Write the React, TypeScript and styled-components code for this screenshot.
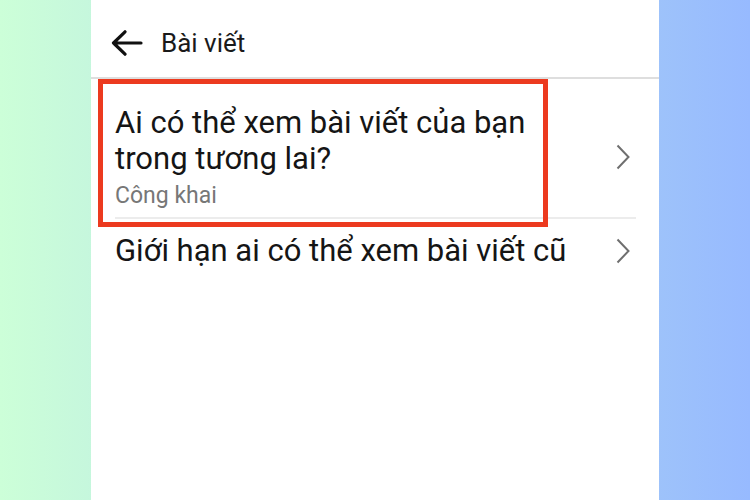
import styled, { createGlobalStyle } from "styled-components";

const GlobalStyle = createGlobalStyle`
  html, body {
    margin: 0;
    padding: 0;
    height: 100%;
  }
  body {
    font-family: Roboto, "Noto Sans", "Liberation Sans", sans-serif;
    background: linear-gradient(90deg, #ccffd8 0%, #97baff 100%);
  }
  #root {
    height: 100%;
  }
`;

const Page = styled.div`
  height: 100vh;
  display: flex;
  justify-content: flex-start;
  padding-left: 91px;
  box-sizing: border-box;
`;

const Screen = styled.div`
  width: 568px;
  height: 100%;
  background: #ffffff;
  display: flex;
  flex-direction: column;
`;

const Header = styled.div`
  height: 79px;
  box-sizing: border-box;
  border-bottom: 2px solid #dedede;
  display: flex;
  align-items: center;
  padding: 8px 0 0 20px;
  gap: 18px;
`;

const BackButton = styled.button`
  border: none;
  background: none;
  padding: 0;
  display: flex;
  cursor: pointer;
`;

const Title = styled.h1`
  margin: 0;
  font-size: 26px;
  font-weight: 400;
  color: #1a1a1a;
`;

const List = styled.div`
  display: flex;
  flex-direction: column;
`;

const Row = styled.div<{ $divider?: boolean; $top: number; $bottom: number }>`
  position: relative;
  margin: 0 23px 0 24px;
  padding: ${(p) => p.$top}px 6px ${(p) => p.$bottom}px 0;
  display: flex;
  align-items: center;
  justify-content: space-between;
  border-bottom: ${(p) => (p.$divider ? "2px solid #ececec" : "none")};
`;

const RowText = styled.div`
  display: flex;
  flex-direction: column;
`;

const RowLabel = styled.div`
  font-size: 31px;
  line-height: 36px;
  color: #151515;
  max-width: 470px;
`;

const RowValue = styled.div`
  margin-top: 5px;
  font-size: 23px;
  line-height: 27px;
  color: #777777;
`;

const Highlight = styled.div`
  position: absolute;
  left: -17px;
  top: 0;
  width: 450px;
  height: 148px;
  box-sizing: border-box;
  border: 5px solid #ec3a1f;
  pointer-events: none;
`;

const ArrowLeft = () => (
  <svg width="32" height="26" viewBox="0 0 32 26" fill="none">
    <path
      d="M2.5 13H30M14 1.8L2.5 13 14 24.2"
      stroke="#111"
      strokeWidth="3.2"
      strokeLinecap="round"
      strokeLinejoin="round"
    />
  </svg>
);

const Chevron = () => (
  <svg width="14" height="26" viewBox="0 0 14 26" fill="none">
    <path d="M1.5 1.5L12.5 13 1.5 24.5" stroke="#6f6f6f" strokeWidth="2" />
  </svg>
);

const App = () => {
  return (
    <>
      <GlobalStyle />
      <Page>
        <Screen>
          <Header>
            <BackButton aria-label="Quay lại">
              <ArrowLeft />
            </BackButton>
            <Title>Bài viết</Title>
          </Header>
          <List>
            <Row $divider $top={26} $bottom={8}>
              <Highlight />
              <RowText>
                <RowLabel>Ai có thể xem bài viết của bạn trong tương lai?</RowLabel>
                <RowValue>Công khai</RowValue>
              </RowText>
              <Chevron />
            </Row>
            <Row $top={14} $bottom={14}>
              <RowText>
                <RowLabel>Giới hạn ai có thể xem bài viết cũ</RowLabel>
              </RowText>
              <Chevron />
            </Row>
          </List>
        </Screen>
      </Page>
    </>
  );
};

export default App;
